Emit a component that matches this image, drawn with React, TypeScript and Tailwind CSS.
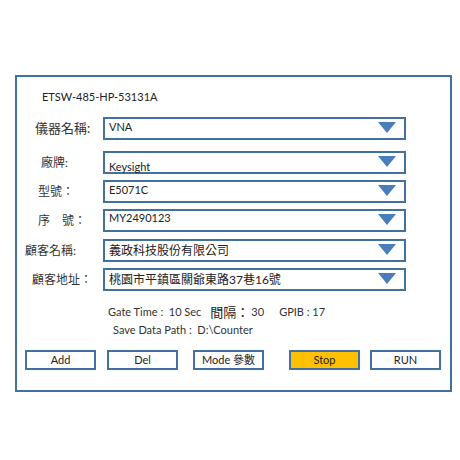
import React from 'react';

const FONT = "font-['Lato','Noto_Sans_CJK_TC',sans-serif]";

interface FieldRow {
  label: string;
  labelPad: string;
  labelSize: string;
  value: string;
  valueClass: string;
  mt: string;
}

const ROWS: FieldRow[] = [
  { label: '儀器名稱:', labelPad: 'pl-[18px]', labelSize: 'text-[13px]', value: 'VNA', valueClass: 'text-[11px] -mt-[2px]', mt: 'mt-[13px]' },
  { label: '廠牌:', labelPad: 'pl-[24px]', labelSize: 'text-[12px]', value: 'Keysight', valueClass: 'text-[11px] mt-[4px]', mt: 'mt-[11px]' },
  { label: '型號：', labelPad: 'pl-[21px]', labelSize: 'text-[12px]', value: 'E5071C', valueClass: 'text-[11px] -mt-[2px]', mt: 'mt-[6px]' },
  { label: '序　號：', labelPad: 'pl-[21px]', labelSize: 'text-[12px]', value: 'MY2490123', valueClass: 'text-[11px] -mt-[3px]', mt: 'mt-[6px]' },
  { label: '顧客名稱:', labelPad: 'pl-[8px]', labelSize: 'text-[12px]', value: '義政科技股份有限公司', valueClass: 'text-[12px]', mt: 'mt-[7px]' },
  { label: '顧客地址：', labelPad: 'pl-[15px]', labelSize: 'text-[12px]', value: '桃園市平鎮區關爺東路37巷16號', valueClass: 'text-[12px]', mt: 'mt-[6px]' },
];

const Arrow = () => (
  <svg width="18" height="11" viewBox="0 0 18 11" className="mt-[3px] mr-[8px] shrink-0">
    <polygon points="0,0 18,0 9,11" fill="#4a7ebb" />
  </svg>
);

const Button: React.FC<{ label: string; ml: string; active?: boolean }> = ({ label, ml, active }) => (
  <div
    className={`${ml} w-[71px] h-[20px] border-2 border-[#41719c] flex items-center justify-center text-[11px] text-[#222] ${
      active ? 'bg-[#ffc000]' : 'bg-white'
    }`}
  >
    {label}
  </div>
);

export default function App() {
  return (
    <div className={`w-[460px] h-[460px] bg-white pt-[75px] pl-[15px] ${FONT}`}>
      <div className="w-[437px] h-[317px] border-2 border-[#41719c] flex flex-col">
        {/* Header */}
        <div className="mt-[13px] pl-[25px] text-[11px] leading-[14px] text-[#222]">ETSW-485-HP-53131A</div>

        {/* Fields */}
        {ROWS.map((row) => (
          <div key={row.label} className={`${row.mt} flex items-center h-[23px]`}>
            <div className={`w-[86px] ${row.labelPad} ${row.labelSize} text-[#333] whitespace-nowrap`}>{row.label}</div>
            <div className="w-[303px] h-[23px] border-2 border-[#41719c] flex justify-between items-start bg-white">
              <span className={`pl-[4px] leading-[19px] text-[#222] ${row.valueClass}`}>{row.value}</span>
              <Arrow />
            </div>
          </div>
        ))}

        {/* Info */}
        <div className="mt-[14px] pl-[91px] flex items-center text-[11px] leading-[14px] text-[#333] whitespace-nowrap">
          <span>Gate Time :&nbsp;&nbsp;10 Sec</span>
          <span className="ml-[9px] text-[13px] text-[#222]">間隔：</span>
          <span className="ml-[2px]">30</span>
          <span className="ml-[15px]">GPIB : 17</span>
        </div>
        <div className="mt-[4px] pl-[96px] text-[11px] leading-[14px] text-[#333] whitespace-nowrap">
          Save Data Path :&nbsp;&nbsp;D:\Counter
        </div>

        {/* Buttons */}
        <div className="mt-[13px] flex">
          <Button label="Add" ml="ml-[8px]" />
          <Button label="Del" ml="ml-[11px]" />
          <Button label="Mode 參數" ml="ml-[15px]" />
          <Button label="Stop" ml="ml-[25px]" active />
          <Button label="RUN" ml="ml-[10px]" />
        </div>
      </div>
    </div>
  );
}
